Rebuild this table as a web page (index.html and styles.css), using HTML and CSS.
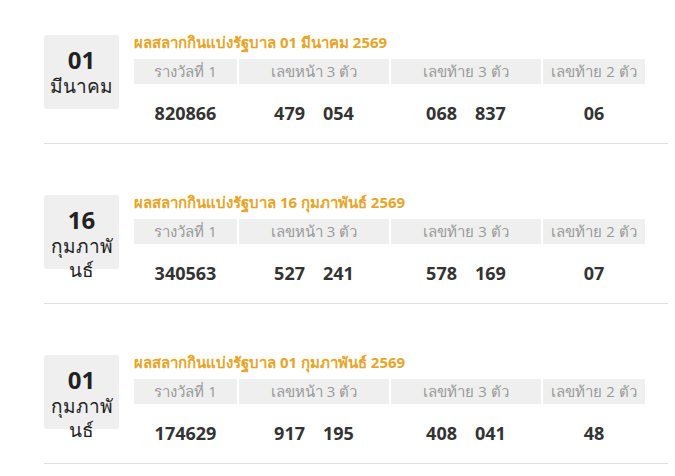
FILE: index.html
```html
<!DOCTYPE html>
<html lang="th">
<head>
<meta charset="utf-8">
<link rel="stylesheet" href="styles.css">
</head>
<body>
<div class="list">
  <section class="draw">
    <div class="date"><div class="day">01</div><div class="month">มีนาคม</div></div>
    <div class="result">
      <h2 class="title">ผลสลากกินแบ่งรัฐบาล 01 มีนาคม 2569</h2>
      <div class="grid">
        <div class="head">รางวัลที่ 1</div>
        <div class="head">เลขหน้า 3 ตัว</div>
        <div class="head">เลขท้าย 3 ตัว</div>
        <div class="head">เลขท้าย 2 ตัว</div>
        <div class="val">820866</div>
        <div class="val"><span>479</span><span>054</span></div>
        <div class="val"><span>068</span><span>837</span></div>
        <div class="val">06</div>
      </div>
    </div>
  </section>
  <section class="draw">
    <div class="date"><div class="day">16</div><div class="month">กุมภาพันธ์</div></div>
    <div class="result">
      <h2 class="title">ผลสลากกินแบ่งรัฐบาล 16 กุมภาพันธ์ 2569</h2>
      <div class="grid">
        <div class="head">รางวัลที่ 1</div>
        <div class="head">เลขหน้า 3 ตัว</div>
        <div class="head">เลขท้าย 3 ตัว</div>
        <div class="head">เลขท้าย 2 ตัว</div>
        <div class="val">340563</div>
        <div class="val"><span>527</span><span>241</span></div>
        <div class="val"><span>578</span><span>169</span></div>
        <div class="val">07</div>
      </div>
    </div>
  </section>
  <section class="draw">
    <div class="date"><div class="day">01</div><div class="month">กุมภาพันธ์</div></div>
    <div class="result">
      <h2 class="title">ผลสลากกินแบ่งรัฐบาล 01 กุมภาพันธ์ 2569</h2>
      <div class="grid">
        <div class="head">รางวัลที่ 1</div>
        <div class="head">เลขหน้า 3 ตัว</div>
        <div class="head">เลขท้าย 3 ตัว</div>
        <div class="head">เลขท้าย 2 ตัว</div>
        <div class="val">174629</div>
        <div class="val"><span>917</span><span>195</span></div>
        <div class="val"><span>408</span><span>041</span></div>
        <div class="val">48</div>
      </div>
    </div>
  </section>
</div>
</body>
</html>
```
FILE: styles.css
```css
html, body {
  margin: 0;
  padding: 0;
  background: #fff;
}
body {
  font-family: "Open Sans", "Noto Sans", "Noto Sans CJK SC", sans-serif;
  color: #333;
}
.list {
  padding: 0 7px 0 44px;
}
.draw {
  display: flex;
  gap: 15px;
  padding-top: 31px;
  margin-bottom: 16px;
  border-bottom: 1px solid #dedede;
  height: 112px;
}
.date {
  flex: 0 0 75px;
  width: 75px;
  min-width: 0;
  height: 74px;
  margin-top: 4px;
  background: #efefef;
  border-radius: 2px;
  text-align: center;
  box-sizing: border-box;
  padding: 12px 5px 0;
  word-break: break-all;
  overflow-wrap: anywhere;
}
.day {
  font-size: 24px;
  font-weight: 700;
  line-height: 26px;
  margin-bottom: 1px;
  color: #222;
}
.month {
  font-size: 19px;
  line-height: 24px;
  color: #222;
}
.result {
  flex: 0 0 509px;
  width: 509px;
}
.title {
  margin: 0 0 6px;
  font-size: 15px;
  line-height: 22px;
  font-weight: 700;
  color: #e6a528;
  white-space: nowrap;
}
.grid {
  display: grid;
  grid-template-columns: 103px 150px 150px 102px;
  column-gap: 2px;
}
.head {
  background: #efefef;
  height: 25px;
  line-height: 25px;
  text-align: center;
  font-size: 15px;
  color: #9a9a9a;
}
.val {
  height: 58px;
  display: flex;
  justify-content: center;
  align-items: center;
  gap: 18px;
  font-size: 18px;
  font-weight: 700;
  color: #333;
}
```
